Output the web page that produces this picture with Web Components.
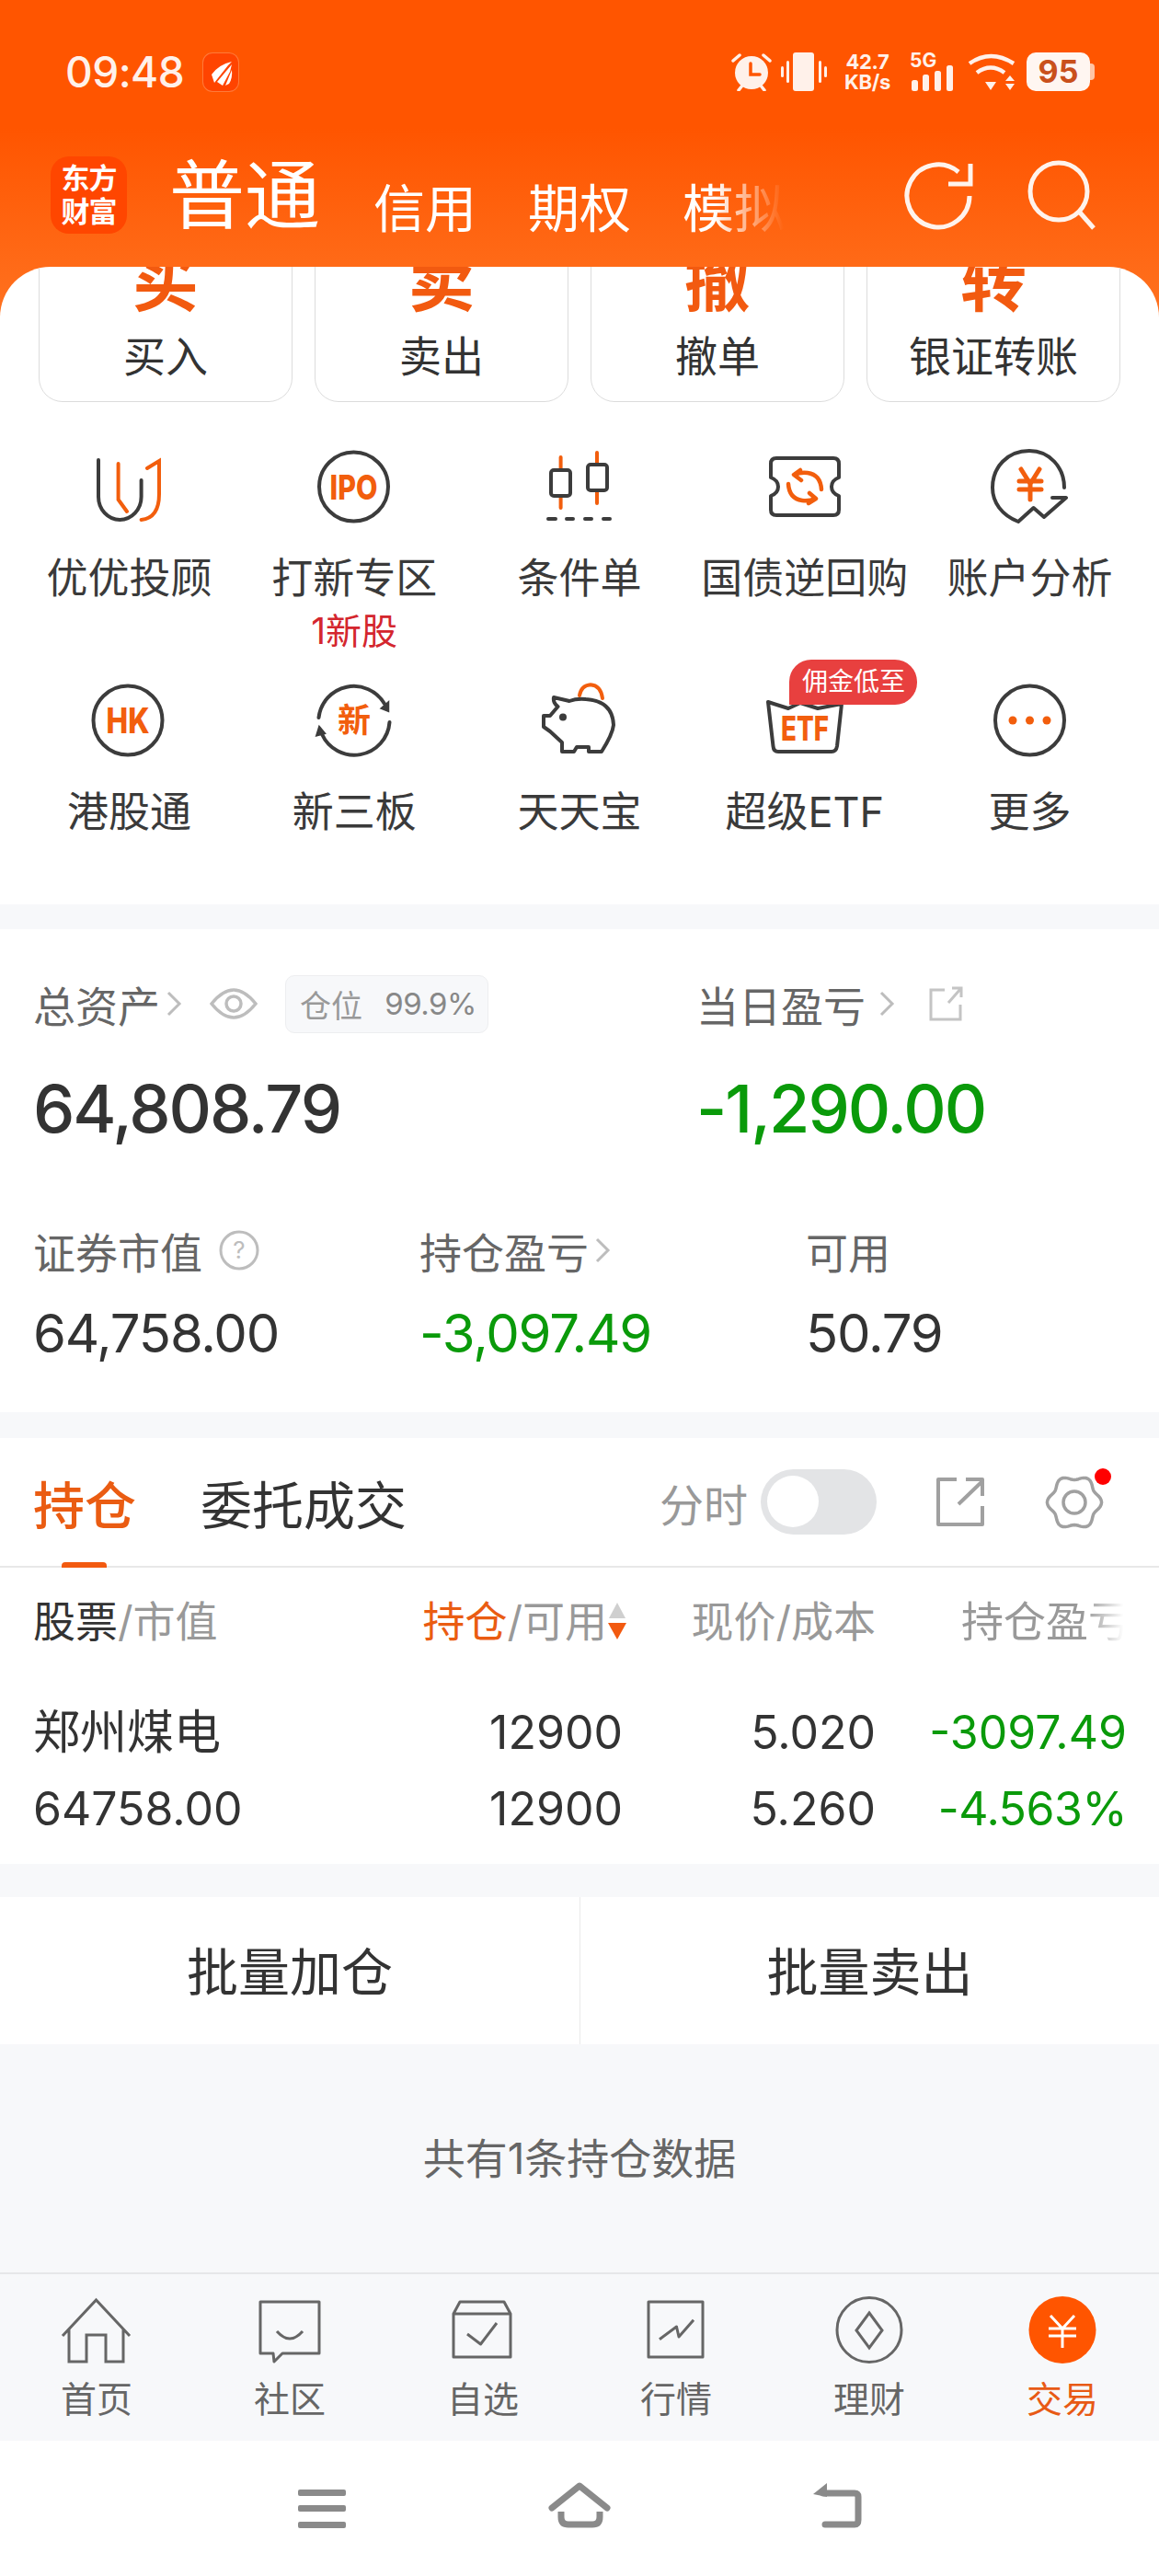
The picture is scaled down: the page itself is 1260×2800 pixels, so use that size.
<!DOCTYPE html>
<html lang="zh-CN">
<head>
<meta charset="utf-8">
<title>交易</title>
<style>
  html, body { margin: 0; padding: 0; }
  body {
    width: 1260px; height: 2800px; overflow: hidden;
    background: #F7F8FA; color: #333;
    font-family: Inter, "Noto Sans CJK SC", sans-serif;
    display: flex; flex-direction: column;
  }
  .gap { flex: none; }
  svg { display: block; }
</style>
</head>
<body>

<em-header></em-header>

<em-panel>
  <em-tile slot="actions" mark="买">买入</em-tile>
  <em-tile slot="actions" mark="卖">卖出</em-tile>
  <em-tile slot="actions" mark="撤">撤单</em-tile>
  <em-tile slot="actions" mark="转">银证转账</em-tile>

  <em-entry sub="">
    <svg slot="icon" width="90" height="90" fill="none" stroke-width="4" stroke-linecap="round">
      <path d="M12 16V56a23.3 25 0 0 0 46.6 0V38" stroke="#3c3c3c"/>
      <path d="M33.6 20V59L43 72M65 25L78 17V53Q78 79 58.6 81" stroke="#F25E0D"/>
    </svg>优优投顾</em-entry>
  <em-entry sub="1新股">
    <svg slot="icon" width="90" height="90" fill="none" stroke-width="4">
      <circle cx="44.5" cy="45" r="37.5" stroke="#3c3c3c"/>
      <text x="44.5" y="59" text-anchor="middle" font-size="37" font-weight="800" fill="#F25E0D" stroke="none" textLength="52" lengthAdjust="spacingAndGlyphs">IPO</text>
    </svg>打新专区</em-entry>
  <em-entry>
    <svg slot="icon" width="90" height="90" fill="none" stroke-width="4" stroke-linecap="round">
      <path d="M24.6 13V26M24.6 55V68M64 8V20M64 49V63" stroke="#F25E0D"/>
      <rect x="14" y="27" width="21" height="28" rx="3" stroke="#3c3c3c"/>
      <rect x="54" y="21" width="21" height="28" rx="3" stroke="#3c3c3c"/>
      <path d="M11 80H19M31 80H38M51 80H58M71 80H78" stroke="#3c3c3c"/>
    </svg>条件单</em-entry>
  <em-entry>
    <svg slot="icon" width="90" height="90" fill="none" stroke-width="4" stroke-linecap="round" stroke-linejoin="round">
      <path d="M14 14H76Q82 14 82 20V35Q74 38 74 45T82 55V70Q82 76 76 76H14Q8 76 8 70V55Q16 52 16 45T8 35V20Q8 14 14 14Z" stroke="#3c3c3c"/>
      <path d="M34 32Q40 29 48 30Q62 32 63 48M56 58Q50 61 42 60Q28 58 27 42" stroke="#F25E0D" stroke-width="4.500"/>
      <path d="M40 27L33 32L41 38M50 52L57 58L49 63" stroke="#F25E0D" stroke-width="4.500"/>
    </svg>国债逆回购</em-entry>
  <em-entry>
    <svg slot="icon" width="90" height="90" fill="none" stroke-width="4" stroke-linecap="round" stroke-linejoin="round">
      <path d="M82 46C82 24 66 6 44 6C20 6 4 24 4 46C4 62 14 76 32 83L48.600 68L60 78L84 57H69" stroke="#3c3c3c"/>
      <path d="M35 26L45 42L55 26M33 39H57M33 48H57M45 42V59" stroke="#F25E0D" stroke-width="5"/>
    </svg>账户分析</em-entry>
  <em-entry>
    <svg slot="icon" width="90" height="90" fill="none" stroke-width="4">
      <circle cx="44" cy="45" r="37.500" stroke="#3c3c3c"/>
      <text x="44" y="59" text-anchor="middle" font-size="38" font-weight="800" fill="#F25E0D" stroke="none" textLength="47" lengthAdjust="spacingAndGlyphs">HK</text>
    </svg>港股通</em-entry>
  <em-entry>
    <svg slot="icon" width="90" height="90" fill="none" stroke-width="4" stroke-linecap="round">
      <path d="M6.500 42A38.500 38.500 0 0 1 78 27M83.500 47A38.500 38.500 0 0 1 10 60" stroke="#3c3c3c"/>
      <path d="M74 32L82.500 24.700V35.300ZM7 51.300L3.700 62L13.600 59.300Z" fill="#3c3c3c" stroke="#3c3c3c" stroke-width="1.500"/>
      <text x="45" y="58" text-anchor="middle" font-size="36" font-weight="700" fill="#F25E0D" stroke="none">新</text>
    </svg>新三板</em-entry>
  <em-entry>
    <svg slot="icon" width="90" height="90" fill="none" stroke-width="4" stroke-linecap="round" stroke-linejoin="round">
      <path d="M45 18Q47 7 57 6.300Q68 7 70 21" stroke="#F25E0D"/>
      <path d="M17 20L34 24Q42 21 52 22Q81 24 82 50Q81 60 69 79H55V74H42L39 79H26V69L13 57L6 52V40L13 40L21.500 30Q16 26 17 20Z" stroke="#3c3c3c"/>
      <circle cx="27" cy="41.500" r="4" fill="#3c3c3c" stroke="none"/>
    </svg>天天宝</em-entry>
  <em-entry badge="佣金低至">
    <svg slot="icon" width="90" height="90" fill="none" stroke-width="4" stroke-linecap="round" stroke-linejoin="round">
      <path d="M5 25L27 32L40 26L59 32L85 27L80 73Q79 79 74 79H16Q11 79 10.500 73Z" stroke="#3c3c3c"/>
      <text x="45" y="67" text-anchor="middle" font-size="37" font-weight="800" fill="#F25E0D" stroke="none" textLength="52" lengthAdjust="spacingAndGlyphs">ETF</text>
    </svg>超级ETF</em-entry>
  <em-entry>
    <svg slot="icon" width="90" height="90" fill="none" stroke-width="4">
      <circle cx="44.500" cy="45" r="37.500" stroke="#3c3c3c"/>
      <circle cx="26" cy="45" r="4.500" fill="#F25E0D" stroke="none"/>
      <circle cx="44.500" cy="45" r="4.500" fill="#F25E0D" stroke="none"/>
      <circle cx="63" cy="45" r="4.500" fill="#F25E0D" stroke="none"/>
    </svg>更多</em-entry>
</em-panel>

<div class="gap" style="height:27px"></div>
<em-assets></em-assets>
<div class="gap" style="height:28px"></div>
<em-positions></em-positions>
<div class="gap" style="height:36px"></div>
<em-batch></em-batch>
<em-summary>共有1条持仓数据</em-summary>

<em-tabbar>
  <em-tab><svg slot="icon" width="80" height="76" fill="none" stroke="#666" stroke-width="3"><path d="M3 43L39.500 4L76 43M10 36V71H29V42H50V71H69V36"/></svg>首页</em-tab>
  <em-tab><svg slot="icon" width="80" height="76" fill="none" stroke="#666" stroke-width="3" stroke-linejoin="round"><path d="M8 6H72V62H32L23 71L22 62H8Z"/><path d="M26 38Q40 54 54 38"/></svg>社区</em-tab>
  <em-tab><svg slot="icon" width="80" height="76" fill="none" stroke="#666" stroke-width="3" stroke-linejoin="round"><path d="M8 19L15 6H63L70 19V66H8ZM8 19H70"/><path d="M23 41L37.500 52L55 29"/></svg>自选</em-tab>
  <em-tab><svg slot="icon" width="80" height="76" fill="none" stroke="#666" stroke-width="3" stroke-linejoin="round"><path d="M10 6H69V66H10Z"/><path d="M22 46.700L40.500 33L43 44L59 25.700"/></svg>行情</em-tab>
  <em-tab><svg slot="icon" width="80" height="76" fill="none" stroke="#666" stroke-width="3"><circle cx="40" cy="36.500" r="35"/><path d="M40 18L54 37L40 56L26 37Z"/></svg>理财</em-tab>
  <em-tab active><svg slot="icon" width="80" height="76" fill="none" stroke="#fff" stroke-width="3"><circle cx="40" cy="36.500" r="36.500" fill="#FF5500" stroke="none"/><path d="M27 21L40 35L53 21M25 35H55M25 43H55M40 35V56"/></svg>交易</em-tab>
</em-tabbar>

<em-navbar></em-navbar>

<script>
const chevron = '<svg class="chev" width="18" height="30" fill="none" stroke="#BDBDBD" stroke-width="3"><path d="M3 3L15 15L3 27"/></svg>';

class EmHeader extends HTMLElement {
  constructor() {
    super();
    this.attachShadow({ mode: 'open' });
    this.shadowRoot.innerHTML = `<style>
      :host { display: block; flex: none; height: 345px; background: linear-gradient(#FF5500 0, #FF5500 140px, #FF7220 345px); color: #fff; }
      svg { display: block; flex: none; }
      .status { height: 156px; display: flex; align-items: center; padding-left: 71px; color: #FFF1EA; }
      .time { font-size: 46px; font-weight: 500; width: 150px; letter-spacing: -.5px; }
      .app { width: 38px; height: 41px; border-radius: 10px; background: #FF4400; box-shadow: 0 0 0 1px #FF7A3A; }
      .right { margin-left: auto; display: flex; align-items: center; padding-right: 70px; height: 44px; }
      .speed { margin-left: 18px; width: 52px; font-size: 22px; line-height: 22px; font-weight: 700; text-align: center; white-space: nowrap; letter-spacing: -.3px; }
      .sig { margin-left: 20px; width: 50px; height: 42px; font-size: 21px; line-height: 17px; font-weight: 700; white-space: nowrap; }
      .sig svg { margin-top: -3px; }
      .battery { margin-left: 12px; width: 69px; height: 42px; border-radius: 10px; background: #FFF6F1; color: #C9501C; font-size: 34px; font-weight: 700; line-height: 42px; text-align: center; }
      .nub { width: 5px; height: 18px; background: #FFC5A5; border-radius: 0 4px 4px 0; }
      .nav { display: flex; align-items: flex-start; height: 134px; }
      .logo { margin: 14px 0 0 55px; width: 83px; height: 84px; border-radius: 20px; background: #FF4600; font-size: 31px; font-weight: 700; line-height: 36px; text-align: center; padding-top: 6px; box-sizing: border-box; flex: none; letter-spacing: -1px; }
      .main { margin: 12px 0 0 46px; font-size: 82px; line-height: 90px; font-weight: 400; width: 222px; flex: none; white-space: nowrap; }
      .tabs { margin-top: 34px; width: 452px; flex: none; display: flex; gap: 56px; font-size: 56px; line-height: 74px; -webkit-mask-image: linear-gradient(90deg, #000 370px, transparent 446px); mask-image: linear-gradient(90deg, #000 370px, transparent 446px); }
      .refresh { margin: 19px 0 0 124px; }
      .search { margin: 16px 0 0 57px; }
    </style>
    <div class="status">
      <div class="time">09:48</div>
      <div class="app"><svg width="38" height="41" fill="#fff"><path d="M31 9Q17 12 9 23L12 32L27 13Z"/><path d="M31 12L15 31L21 35L29 20Z"/><path d="M31 18L24 35L28 33Q32 27 31 18Z"/></svg></div>
      <div class="right">
        <svg width="44" height="42" fill="none" stroke="#FFF1EA" stroke-width="3.500" stroke-linecap="round"><path d="M2 9L9 3M35 3L42 9M8 41L12 36M36 41L32 36"/><circle cx="22" cy="22" r="18" fill="#FFF1EA" stroke="none"/><path d="M21 12V24H31" stroke="#FF5500"/></svg>
        <svg style="margin-left:10px" width="50" height="42" fill="#FFF1EA"><rect x="13" y="0" width="23" height="42" rx="3"/><rect x="0" y="15" width="3" height="12" rx="1.500"/><rect x="6" y="9" width="3" height="24" rx="1.500"/><rect x="41" y="9" width="3" height="24" rx="1.500"/><rect x="47" y="15" width="3" height="12" rx="1.500"/></svg>
        <div class="speed">42.7<br>KB/s</div>
        <div class="sig">5G<svg width="50" height="28" fill="#FFF1EA"><rect x="2" y="16" width="7" height="12" rx="2.500"/><rect x="14" y="10" width="7" height="18" rx="2.500"/><rect x="27" y="6" width="7" height="22" rx="2.500"/><rect x="40" y="0" width="7" height="28" rx="2.500"/></svg></div>
        <svg style="margin-left:13px" width="52" height="42" fill="none" stroke="#FFF1EA" stroke-width="4.500"><path d="M2 12Q25 -4 50 12M10 22Q25 11 40 22"/><path d="M19 32L31 32L25 41Z M41 31L46 25L51 31Z M41 34L51 34L46 41Z" fill="#FFF1EA" stroke="none"/></svg>
        <div class="battery">95</div>
        <div class="nub"></div>
      </div>
    </div>
    <div class="nav">
      <div class="logo">东方<br>财富</div>
      <div class="main">普通</div>
      <div class="tabs"><span>信用</span><span>期权</span><span>模拟</span></div>
      <svg class="refresh" width="76" height="76" fill="none" stroke="#FFF3EC" stroke-width="5"><path d="M60 12A34 34 0 1 0 72 38"/><path d="M73 3V25H49"/></svg>
      <svg class="search" width="78" height="78" fill="none" stroke="#FFF3EC" stroke-width="5"><circle cx="36" cy="36" r="31"/><path d="M59 59L74 76"/></svg>
    </div>`;
  }
}

class EmPanel extends HTMLElement {
  constructor() {
    super();
    this.attachShadow({ mode: 'open' });
    this.shadowRoot.innerHTML = `<style>
      :host { display: block; flex: none; height: 693px; margin-top: -55px; background: #fff; border-radius: 55px 55px 0 0; overflow: hidden; position: relative; }
      .actions { display: grid; grid-template-columns: repeat(4, 1fr); gap: 24px; padding: 0 42px; margin-top: -53px; }
      .grid { display: grid; grid-template-columns: repeat(5, 1fr); grid-auto-rows: 254px; padding: 0 18px; margin-top: 47px; }
    </style>
    <div class="actions"><slot name="actions"></slot></div>
    <div class="grid"><slot></slot></div>`;
  }
}

class EmTile extends HTMLElement {
  constructor() {
    super();
    this.attachShadow({ mode: 'open' });
    this.shadowRoot.innerHTML = `<style>
      :host { display: block; height: 200px; box-sizing: border-box; border: 1.5px solid #DCDCDC; border-radius: 26px; text-align: center; font-size: 46px; line-height: 56px; }
      .mark { font-size: 72px; line-height: 68px; font-weight: 700; color: #F25A10; padding-top: 34px; margin-bottom: 19px; }
    </style>
    <div class="mark">${this.getAttribute('mark')}</div><slot></slot>`;
  }
}

class EmEntry extends HTMLElement {
  constructor() {
    super();
    this.attachShadow({ mode: 'open' });
    const sub = this.getAttribute('sub');
    const badge = this.getAttribute('badge');
    this.shadowRoot.innerHTML = `<style>
      :host { display: flex; flex-direction: column; align-items: center; position: relative; font-size: 45px; line-height: 56px; color: #3a3a3a; white-space: nowrap; }
      .icon { height: 90px; margin-bottom: 27px; }
      .sub { margin-top: 7px; font-size: 39px; line-height: 44px; color: #D4262E; }
      .badge { position: absolute; left: 106px; top: -21px; width: 139px; height: 49px; background: #E8403F; border-radius: 24px 24px 24px 0; color: #fff; font-size: 28px; line-height: 49px; text-align: center; }
    </style>
    <div class="icon"><slot name="icon"></slot></div>
    <slot></slot>
    ${sub ? `<div class="sub">${sub}</div>` : ''}
    ${badge ? `<div class="badge">${badge}</div>` : ''}`;
  }
}

class EmAssets extends HTMLElement {
  constructor() {
    super();
    this.attachShadow({ mode: 'open' });
    this.shadowRoot.innerHTML = `<style>
      :host { display: block; flex: none; height: 525px; box-sizing: border-box; background: #fff; padding: 50px 0 0 36px; color: #333; }
      svg { display: block; flex: none; }
      .top { display: grid; grid-template-columns: 721px 1fr; }
      .low { display: grid; grid-template-columns: 420px 420px 1fr; margin-top: 84px; }
      .label { height: 62px; display: flex; align-items: center; font-size: 46px; color: #666; white-space: nowrap; }
      .low .label { height: 60px; }
      .chev { margin-left: 6px; }
      .big { margin-top: 43px; font-size: 72px; line-height: 80px; font-weight: 500; letter-spacing: -2px; }
      .num { margin-top: 27px; font-size: 58px; line-height: 66px; letter-spacing: -1.2px; }
      .green { color: #0A9A0A; }
      .chip { margin-left: 30px; width: 221px; height: 63px; box-sizing: border-box; border: 1px solid #EDEEF0; border-radius: 10px; background: #F7F8FA; display: flex; align-items: center; justify-content: space-between; padding: 0 12px 0 15px; font-size: 34px; color: #999; }
      .chip b { font-weight: 400; font-size: 33px; color: #888; letter-spacing: -.5px; }
    </style>
    <div class="top">
      <div>
        <div class="label">总资产${chevron}
          <svg style="margin-left:30px" width="52" height="36" fill="none" stroke="#BDBDBD" stroke-width="3.500"><path d="M2 18Q26 -12 50 18Q26 48 2 18Z"/><circle cx="26" cy="18" r="8"/></svg>
          <div class="chip">仓位<b>99.9%</b></div>
        </div>
        <div class="big">64,808.79</div>
      </div>
      <div>
        <div class="label">当日盈亏<span style="width:8px"></span>${chevron}
          <svg style="margin-left:36px" width="38" height="38" fill="none" stroke="#C4C4C4" stroke-width="3"><path d="M18 4H3V36H35V20M22 18L36 2M26 2H36V12"/></svg>
        </div>
        <div class="big green">-1,290.00</div>
      </div>
    </div>
    <div class="low">
      <div>
        <div class="label">证券市值
          <svg style="margin-left:18px" width="44" height="44" fill="none" stroke="#BDBDBD" stroke-width="3"><circle cx="22" cy="22" r="20"/><text x="22" y="31" text-anchor="middle" font-size="26" fill="#BDBDBD" stroke="none">?</text></svg>
        </div>
        <div class="num">64,758.00</div>
      </div>
      <div>
        <div class="label">持仓盈亏${chevron}</div>
        <div class="num green">-3,097.49</div>
      </div>
      <div>
        <div class="label">可用</div>
        <div class="num">50.79</div>
      </div>
    </div>`;
  }
}

class EmPositions extends HTMLElement {
  constructor() {
    super();
    this.attachShadow({ mode: 'open' });
    // gear outline, six soft lobes
    let gear = '';
    for (let i = 0; i < 72; i++) {
      const t = i / 72 * Math.PI * 2;
      const r = 27 + 2.6 * Math.cos(6 * t);
      gear += (i ? 'L' : 'M') + (32 + r * Math.cos(t)).toFixed(1) + ' ' + (32 + r * Math.sin(t)).toFixed(1);
    }
    this.shadowRoot.innerHTML = `<style>
      :host { display: block; flex: none; height: 463px; background: #fff; color: #333; }
      svg { display: block; flex: none; }
      .tabs { position: relative; height: 139px; border-bottom: 2px solid #E8E8E8; display: flex; align-items: center; padding: 0 60px 0 36px; font-size: 56px; }
      .on { color: #EA5C12; font-weight: 500; }
      .orders { margin-left: 70px; }
      .bar { position: absolute; left: 67px; bottom: -2px; width: 49px; height: 6px; border-radius: 4px 4px 0 0; background: #F25A10; }
      .ctl { margin-left: auto; display: flex; align-items: center; font-size: 48px; color: #999; }
      .toggle { margin-left: 14px; width: 126px; height: 71px; border-radius: 36px; background: #E3E4E6; box-sizing: border-box; padding: 7px; }
      .toggle i { display: block; width: 56px; height: 56px; border-radius: 50%; background: #fff; }
      .gearbox { position: relative; margin-left: 66px; }
      .dot { position: absolute; right: -8px; top: -5px; width: 18px; height: 18px; border-radius: 50%; background: #F00; }
      .row { display: grid; grid-template-columns: 301px 340px 275px 273px; padding-left: 36px; font-size: 50px; line-height: 83px; }
      .row > div:not(:first-child) { text-align: right; white-space: nowrap; }
      .name { font-size: 51px; line-height: 81px; }
      .pct { letter-spacing: -.5px; }
      .head { font-size: 46px; height: 116px; line-height: 116px; margin-bottom: 22px; color: #999; }
      .head b { font-weight: 400; color: #333; }
      .head em { font-style: normal; color: #EA5C12; }
      .sorted { display: flex; justify-content: flex-end; align-items: center; margin-right: -5px; }
      .fade { -webkit-mask-image: linear-gradient(90deg, #000 75%, transparent 98%); mask-image: linear-gradient(90deg, #000 75%, transparent 98%); width: 180px; margin-left: auto; overflow: hidden; white-space: nowrap; }
      .green { color: #0A9A0A; }
    </style>
    <div class="tabs">
      <div class="on">持仓</div><div class="orders">委托成交</div><div class="bar"></div>
      <div class="ctl">分时<div class="toggle"><i></i></div>
        <svg style="margin-left:65px" width="52" height="53" fill="none" stroke="#A0A0A0" stroke-width="4" stroke-linejoin="round"><path d="M22 2H2V51H50V31"/><path d="M24 29L50 4M32 2H50V20"/></svg>
        <div class="gearbox"><svg width="64" height="64" fill="none" stroke="#A0A0A0" stroke-width="3.500"><path d="${gear}Z" stroke-linejoin="round"/><circle cx="32" cy="32" r="12"/></svg><div class="dot"></div></div>
      </div>
    </div>
    <div class="row head">
      <div><b>股票</b>/市值</div>
      <div class="sorted"><span><em>持仓</em>/可用</span><svg width="22" height="40"><path d="M11 0L20 17H2Z" fill="#CFCFCF"/><path d="M1 22H21L11 40Z" fill="#F25A10"/></svg></div>
      <div>现价/成本</div>
      <div><div class="fade">持仓盈亏</div></div>
    </div>
    <div class="row"><div class="name">郑州煤电</div><div>12900</div><div>5.020</div><div class="green">-3097.49</div></div>
    <div class="row"><div>64758.00</div><div>12900</div><div>5.260</div><div class="green pct">-4.563%</div></div>`;
  }
}

class EmBatch extends HTMLElement {
  constructor() {
    super();
    this.attachShadow({ mode: 'open' });
    this.shadowRoot.innerHTML = `<style>
      :host { display: grid; grid-template-columns: 1fr 1fr; flex: none; height: 160px; background: #fff; font-size: 56px; text-align: center; color: #333; }
      div { line-height: 165px; height: 160px; overflow: hidden; }
      div + div { border-left: 1px solid #EAEAEA; }
    </style><div>批量加仓</div><div>批量卖出</div>`;
  }
}

class EmSummary extends HTMLElement {
  constructor() {
    super();
    this.attachShadow({ mode: 'open' });
    this.shadowRoot.innerHTML = `<style>
      :host { display: block; flex: none; height: 248px; box-sizing: border-box; padding-top: 96px; font-size: 46px; line-height: 56px; text-align: center; color: #666; }
    </style><slot></slot>`;
  }
}

class EmTabbar extends HTMLElement {
  constructor() {
    super();
    this.attachShadow({ mode: 'open' });
    this.shadowRoot.innerHTML = `<style>
      :host { display: grid; grid-template-columns: repeat(6, 1fr); flex: none; height: 183px; box-sizing: border-box; border-top: 2px solid #E6E7E9; padding-top: 24px; background: #F7F8FA; }
    </style><slot></slot>`;
  }
}

class EmTab extends HTMLElement {
  constructor() {
    super();
    this.attachShadow({ mode: 'open' });
    this.shadowRoot.innerHTML = `<style>
      :host { display: flex; flex-direction: column; align-items: center; font-size: 39px; line-height: 56px; color: #666; }
      :host([active]) { color: #E85A15; }
      .icon { height: 76px; margin-bottom: 8px; }
    </style><div class="icon"><slot name="icon"></slot></div><slot></slot>`;
  }
}

class EmNavbar extends HTMLElement {
  constructor() {
    super();
    this.attachShadow({ mode: 'open' });
    this.shadowRoot.innerHTML = `<style>
      :host { display: flex; flex: none; height: 147px; box-sizing: border-box; background: #fff; padding: 45px 0 0 324px; }
      svg { display: block; flex: none; }
    </style>
    <svg width="52" height="50" fill="#8A8A8A"><rect y="8" width="52" height="7" rx="2"/><rect y="25" width="52" height="7" rx="2"/><rect y="43" width="52" height="7" rx="2"/></svg>
    <svg style="margin-left:220px" width="68" height="50" fill="none" stroke="#8A8A8A" stroke-width="7" stroke-linecap="round" stroke-linejoin="round"><path d="M4 28L34 4L64 28"/><path d="M14 32V38Q14 46 22 46H48Q56 46 56 38V32" stroke-linecap="butt"/></svg>
    <svg style="margin-left:219px" width="56" height="50" fill="none" stroke="#8A8A8A" stroke-width="7" stroke-linejoin="round"><path d="M12 12H46Q50 12 50 16V41Q50 46 46 46H14" stroke-linecap="round"/><path d="M16 1L1 13L16 16Z" fill="#8A8A8A" stroke="none"/></svg>`;
  }
}

customElements.define('em-header', EmHeader);
customElements.define('em-panel', EmPanel);
customElements.define('em-tile', EmTile);
customElements.define('em-entry', EmEntry);
customElements.define('em-assets', EmAssets);
customElements.define('em-positions', EmPositions);
customElements.define('em-batch', EmBatch);
customElements.define('em-summary', EmSummary);
customElements.define('em-tabbar', EmTabbar);
customElements.define('em-tab', EmTab);
customElements.define('em-navbar', EmNavbar);
</script>
</body>
</html>
